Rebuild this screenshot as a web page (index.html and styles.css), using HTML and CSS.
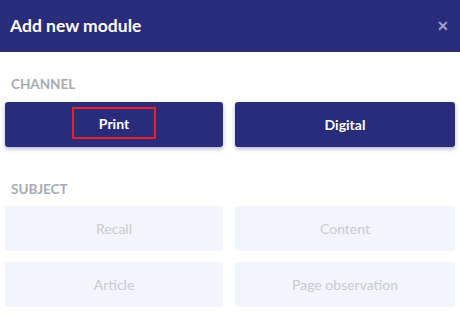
FILE: index.html
```html
<!DOCTYPE html>
<html>
<head>
<meta charset="utf-8">
<link rel="stylesheet" href="styles.css">
</head>
<body>
<div class="modal">
  <div class="header">
    <div class="title">Add new module</div>
    <div class="close">&#x2715;</div>
  </div>
  <div class="section channel">
    <div class="label">CHANNEL</div>
    <div class="grid">
      <button class="btn primary"><span class="hl">Print</span></button>
      <button class="btn primary">Digital</button>
    </div>
  </div>
  <div class="section subject">
    <div class="label">SUBJECT</div>
    <div class="grid">
      <button class="btn disabled">Recall</button>
      <button class="btn disabled">Content</button>
      <button class="btn disabled">Article</button>
      <button class="btn disabled">Page observation</button>
    </div>
  </div>
</div>
</body>
</html>
```
FILE: styles.css
```css
* { box-sizing: border-box; }
html, body { margin: 0; padding: 0; background: #ffffff; }
body { font-family: Lato, "Open Sans", sans-serif; width: 460px; height: 328px; overflow: hidden; }
.modal { display: flex; flex-direction: column; }
.header {
  height: 52px;
  background: #282c7a;
  display: flex;
  align-items: center;
  justify-content: space-between;
  padding: 0 11px 0 10px;
}
.title { color: #ffffff; font-weight: 700; font-size: 17.5px; margin-top: -2px; }
.close { color: #9ea2cd; font-size: 14px; font-weight: 700; margin-top: -2px; }
.section { padding: 0 5px; }
.label {
  color: #a3adb3;
  font-weight: 700;
  font-size: 13.5px;
  padding-left: 6px;
  height: 17px;
  line-height: 17px;
}
.channel .label { margin-top: 24px; margin-bottom: 9px; }
.subject .label { margin-top: 34px; margin-bottom: 8px; }
.grid {
  display: grid;
  grid-template-columns: 218px 220px;
  column-gap: 12px;
  row-gap: 11px;
}
.btn {
  height: 45px;
  border: none;
  border-radius: 3px;
  font-family: inherit;
  font-size: 14px;
  display: flex;
  align-items: center;
  justify-content: center;
  padding: 0;
}
.primary {
  background: #282c7a;
  color: #ffffff;
  font-weight: 700;
  box-shadow: 0 2px 4px rgba(40, 44, 122, 0.35);
}
.disabled {
  background: #f2f5f9;
  color: #c7ccd0;
  font-weight: 400;
}
.hl {
  display: flex;
  align-items: center;
  justify-content: center;
  width: 84px;
  height: 32px;
  border: 2px solid #e8202a;
  margin-top: -3px;
}
```
